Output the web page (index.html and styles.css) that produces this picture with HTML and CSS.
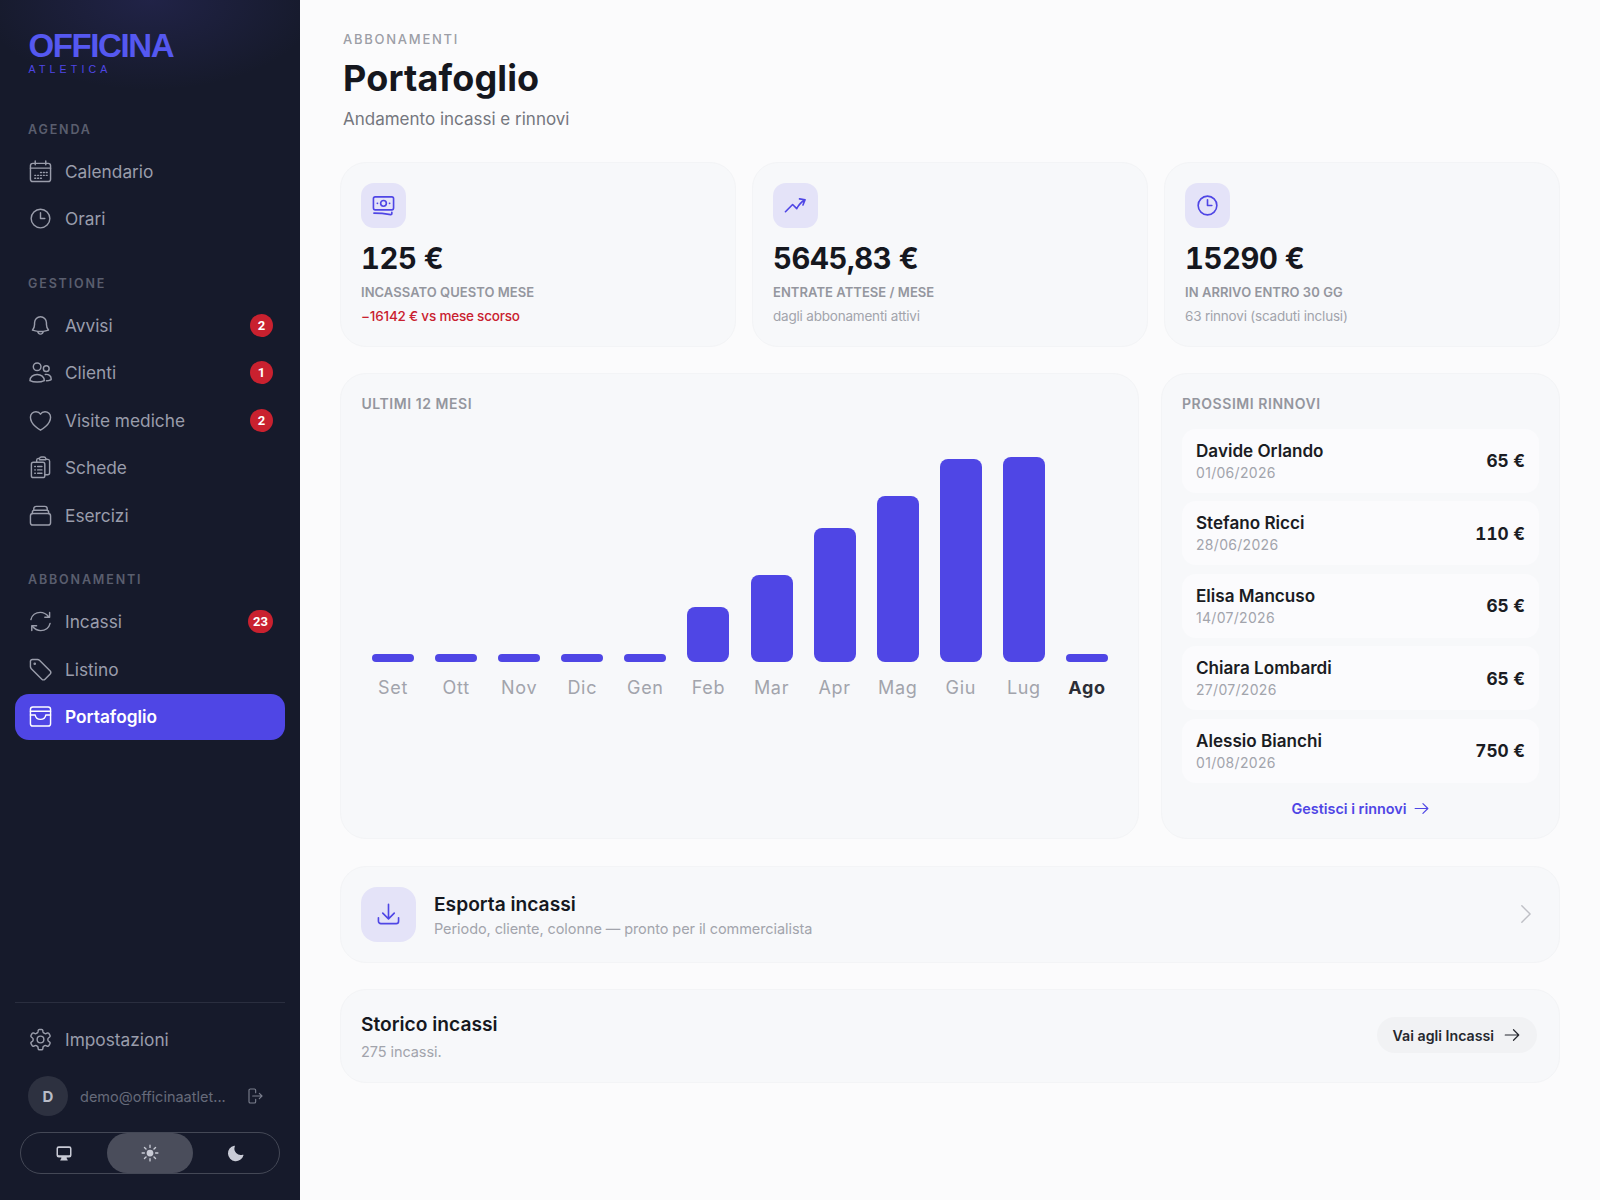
FILE: index.html
```html
<!DOCTYPE html>
<html lang="it">
<head>
<meta charset="utf-8">
<title>Portafoglio</title>
<link rel="stylesheet" href="styles.css">
</head>
<body>
<svg class="defs" width="0" height="0" aria-hidden="true">
  <defs>
    <symbol id="i-arrow" viewBox="0 0 24 24"><path d="M3 12h18M14 5l7 7-7 7"/></symbol>
    <symbol id="i-clock" viewBox="0 0 24 24"><circle cx="12" cy="12" r="9.75"/><path d="M12 6v6h4.5"/></symbol>
  </defs>
</svg>
<div class="app">
  <aside class="sidebar">
    <div class="brand">
      <div class="brand-name">OFFICINA</div>
      <div class="brand-sub">ATLETICA</div>
    </div>
    <nav class="nav">
      <div class="nav-label nav-label-first">AGENDA</div>
      <a class="nav-item"><svg class="nav-icon" viewBox="0 0 24 24"><rect x="1.500" y="3.500" width="21" height="19" rx="2.500"/><path d="M6.500 1v4M17.500 1v4M1.500 8.500h21"/><path class="dots" d="M6 16h1M9 16h1M12 16h1M15 16h1M18 16h1M6 19h1M9 19h1M12 19h1M15 13h1M18 13h1M12 13h1"/></svg><span>Calendario</span></a>
      <a class="nav-item"><svg class="nav-icon" viewBox="0 0 24 24"><use href="#i-clock"/></svg><span>Orari</span></a>

      <div class="nav-label">GESTIONE</div>
      <a class="nav-item"><svg class="nav-icon" viewBox="0 0 24 24"><path d="M14.900 18.100c1.900-.2 3.700-.7 5.500-1.300-1.400-1.600-2.200-3.600-2.200-5.800V9a6.200 6.200 0 1 0-12.400 0v2c0 2.200-.8 4.200-2.200 5.800 1.800.6 3.600 1.100 5.500 1.300m5.800 0a36 36 0 0 1-5.800 0m5.800 0a2.900 2.900 0 1 1-5.800 0"/></svg><span>Avvisi</span><b class="badge">2</b></a>
      <a class="nav-item"><svg class="nav-icon" viewBox="0 0 24 24"><circle cx="8.500" cy="6" r="4"/><circle cx="18" cy="8" r="3"/><path d="M1 20.500c0-4 3.400-6.500 7.500-6.500s7.500 2.500 7.500 6.500c-2 1-5 1.500-7.500 1.500s-5.500-.5-7.500-1.500z"/><path d="M17 14c3.500-.4 6.200 1.500 6.200 5 0 .6-2 1.500-5 1.600"/></svg><span>Clienti</span><b class="badge">1</b></a>
      <a class="nav-item"><svg class="nav-icon" viewBox="0 0 24 24"><path d="M22.500 8.500c0-3.100-2.600-5.600-5.800-5.600-2 0-3.800 1-4.700 2.500-.9-1.500-2.700-2.500-4.700-2.500C4.100 2.900 1.500 5.400 1.500 8.500c0 8 10.500 13.600 10.500 13.600s10.500-5.600 10.500-13.600z"/></svg><span>Visite mediche</span><b class="badge">2</b></a>
      <a class="nav-item"><svg class="nav-icon" viewBox="0 0 24 24"><path d="M16.500 19.500h3a2 2 0 0 0 2-2V5.500a2 2 0 0 0-1.800-2l-1.700-.2"/><path d="M8 6.500V4.500a2 2 0 0 1 1.800-2l1.200-.1A2 2 0 0 1 13 1h2.500a2 2 0 0 1 2 1.500v1.500h-6.700"/><rect x="2.500" y="6.500" width="14" height="16" rx="2"/><path d="M6 11h.6M9 11h4.500M6 14.500h.6M9 14.500h4.500M6 18h.6M9 18h4.500"/></svg><span>Schede</span></a>
      <a class="nav-item"><svg class="nav-icon" viewBox="0 0 24 24"><path d="M5 6.500V5a2.500 2.500 0 0 1 2.500-2.500h9A2.500 2.500 0 0 1 19 5v1.500"/><path d="M3.500 10V8.500A2 2 0 0 1 5.500 6.500h13a2 2 0 0 1 2 2V10"/><rect x="1.500" y="10" width="21" height="12" rx="2.500"/></svg><span>Esercizi</span></a>

      <div class="nav-label">ABBONAMENTI</div>
      <a class="nav-item"><svg class="nav-icon" viewBox="0 0 24 24"><path d="M2 10C3 5.500 7 2.500 11.800 2.500c3.500 0 6.200 1.500 8.700 4.500M2.900 21.500V16.500h5M21.500 2.500V7.500h-5"/><path d="M22 14c-1 4.500-5 7.500-9.800 7.500-3.500 0-6.200-1.500-8.700-4.500"/></svg><span>Incassi</span><b class="badge badge-wide">23</b></a>
      <a class="nav-item"><svg class="nav-icon" viewBox="0 0 24 24"><path d="M3.500 1.500h5.300c.8 0 1.500.3 2.100.9l11 11c1 1 1 2.400.2 3.300l-5.400 5.400c-.9.9-2.400.9-3.300 0l-11-11a3 3 0 0 1-.9-2.100V3.500a2 2 0 0 1 2-2z"/><circle cx="6" cy="6" r=".6"/></svg><span>Listino</span></a>
      <a class="nav-item nav-item-active"><svg class="nav-icon" viewBox="0 0 24 24"><rect x="1.500" y="2" width="21" height="20" rx="2.500"/><path d="M1.500 6.500h21M1.500 10.500h5c.5 2.700 2.700 4.500 5.500 4.500s5-1.800 5.500-4.500h5"/></svg><span>Portafoglio</span></a>
    </nav>

    <div class="side-foot">
      <a class="nav-item"><svg class="nav-icon" viewBox="0 0 24 24"><path d="M9.600 2.500c.1-.6.600-1 1.200-1h2.400c.6 0 1.100.4 1.200 1l.2 1.600c.1.500.4.900.9 1.100l.8.500c.4.200.9.300 1.400.1l1.500-.6c.6-.2 1.200 0 1.500.5l1.200 2.100c.3.500.2 1.200-.3 1.600l-1.300 1c-.4.300-.6.800-.6 1.200v1c0 .5.200.9.600 1.200l1.300 1c.5.400.6 1.100.3 1.600l-1.200 2.100c-.3.500-.9.700-1.500.5l-1.500-.6c-.5-.2-1-.1-1.400.1l-.8.500c-.5.200-.8.600-.9 1.100l-.2 1.600c-.1.600-.6 1-1.200 1h-2.400c-.6 0-1.100-.4-1.200-1l-.2-1.600c-.1-.5-.4-.9-.9-1.100l-.8-.5c-.4-.2-.9-.3-1.400-.1l-1.500.6c-.6.2-1.200 0-1.500-.5l-1.200-2.100c-.3-.5-.2-1.200.3-1.600l1.300-1c.4-.3.600-.8.600-1.200v-1c0-.5-.2-.9-.6-1.200l-1.300-1c-.5-.4-.6-1.100-.3-1.600l1.200-2.100c.3-.5.900-.7 1.500-.5l1.500.6c.5.200 1 .1 1.400-.1l.8-.5c.5-.2.800-.6.900-1.100z"/><circle cx="12" cy="12" r="3.500"/></svg><span>Impostazioni</span></a>
      <div class="user">
        <div class="avatar">D</div>
        <div class="user-mail">demo@officinaatlet...</div>
        <svg class="logout" viewBox="0 0 24 24"><path d="M13 7V3.500A2 2 0 0 0 11 1.500H5a2 2 0 0 0-2 2v17a2 2 0 0 0 2 2h6a2 2 0 0 0 2-2V17M8.500 12h14M18.500 8l4 4-4 4"/></svg>
      </div>
      <div class="theme">
        <div class="theme-opt"><svg class="theme-icon" viewBox="0 0 24 24"><path class="solid" fill-rule="evenodd" d="M5 3h14a3 3 0 0 1 3 3v9a3 3 0 0 1-3 3h-3.500l.5 2.500h1v1.500H7v-1.500h1l.5-2.500H5a3 3 0 0 1-3-3V6a3 3 0 0 1 3-3zm0 2.200a1 1 0 0 0-1 1V14a1 1 0 0 0 1 1h14a1 1 0 0 0 1-1V6.200a1 1 0 0 0-1-1z"/></svg></div>
        <div class="theme-opt theme-opt-active"><svg class="theme-icon" viewBox="0 0 24 24"><circle class="solid" cx="12" cy="12" r="4.500"/><path class="rays" d="M12 1.500v3M12 19.500v3M1.500 12h3M19.500 12h3M4.600 4.600l2.100 2.100M17.300 17.300l2.100 2.100M4.600 19.400l2.100-2.100M17.300 6.700l2.100-2.100"/></svg></div>
        <div class="theme-opt"><svg class="theme-icon" viewBox="0 0 24 24"><path class="solid" d="M9.500 2.200a.8.800 0 0 1 .9 1.100 8.500 8.500 0 0 0 10.500 11 .8.800 0 0 1 1 1A10.500 10.500 0 1 1 9.500 2.200z"/></svg></div>
      </div>
    </div>
  </aside>

  <main class="main">
    <header class="head">
      <div class="eyebrow">ABBONAMENTI</div>
      <h1 class="title">Portafoglio</h1>
      <p class="subtitle">Andamento incassi e rinnovi</p>
    </header>

    <section class="stats">
      <article class="card stat">
        <div class="stat-icon"><svg class="accent-icon" viewBox="0 0 24 24"><rect x="1.500" y="3" width="21" height="13.500" rx="1.800"/><circle cx="12" cy="9.750" r="3"/><path d="M5.500 9.750h.3M18.200 9.750h.3M2 20c6 0 12 .6 17.500 1.500.7.100 1.200-.3 1.200-1V19"/></svg></div>
        <div class="stat-value">125 €</div>
        <div class="stat-label">INCASSATO QUESTO MESE</div>
        <div class="stat-note stat-note-neg">−16142 € vs mese scorso</div>
      </article>
      <article class="card stat">
        <div class="stat-icon"><svg class="accent-icon" viewBox="0 0 24 24"><path d="M1.500 18.500 9 11l4.300 4.300c1.900-3.900 4.800-7 8.700-9.300M22 6l-5.800-.9M22 6l-2.200 5.500"/></svg></div>
        <div class="stat-value">5645,83 €</div>
        <div class="stat-label">ENTRATE ATTESE / MESE</div>
        <div class="stat-note">dagli abbonamenti attivi</div>
      </article>
      <article class="card stat">
        <div class="stat-icon"><svg class="accent-icon" viewBox="0 0 24 24"><use href="#i-clock"/></svg></div>
        <div class="stat-value">15290 €</div>
        <div class="stat-label">IN ARRIVO ENTRO 30 GG</div>
        <div class="stat-note">63 rinnovi (scaduti inclusi)</div>
      </article>
    </section>

    <section class="mid">
      <article class="card chart-card">
        <h2 class="card-title">ULTIMI 12 MESI</h2>
        <div class="chart">
          <div class="col"><div class="bar" style="height:8px"></div><span class="month">Set</span></div>
          <div class="col"><div class="bar" style="height:8px"></div><span class="month">Ott</span></div>
          <div class="col"><div class="bar" style="height:8px"></div><span class="month">Nov</span></div>
          <div class="col"><div class="bar" style="height:8px"></div><span class="month">Dic</span></div>
          <div class="col"><div class="bar" style="height:8px"></div><span class="month">Gen</span></div>
          <div class="col"><div class="bar" style="height:55px"></div><span class="month">Feb</span></div>
          <div class="col"><div class="bar" style="height:87px"></div><span class="month">Mar</span></div>
          <div class="col"><div class="bar" style="height:134px"></div><span class="month">Apr</span></div>
          <div class="col"><div class="bar" style="height:166px"></div><span class="month">Mag</span></div>
          <div class="col"><div class="bar" style="height:203px"></div><span class="month">Giu</span></div>
          <div class="col"><div class="bar" style="height:205px"></div><span class="month">Lug</span></div>
          <div class="col"><div class="bar" style="height:8px"></div><span class="month month-now">Ago</span></div>
        </div>
      </article>

      <article class="card renew-card">
        <h2 class="card-title">PROSSIMI RINNOVI</h2>
        <ul class="renew-list">
          <li class="renew"><div><div class="renew-name">Davide Orlando</div><div class="renew-date">01/06/2026</div></div><div class="renew-amt">65 €</div></li>
          <li class="renew"><div><div class="renew-name">Stefano Ricci</div><div class="renew-date">28/06/2026</div></div><div class="renew-amt">110 €</div></li>
          <li class="renew"><div><div class="renew-name">Elisa Mancuso</div><div class="renew-date">14/07/2026</div></div><div class="renew-amt">65 €</div></li>
          <li class="renew"><div><div class="renew-name">Chiara Lombardi</div><div class="renew-date">27/07/2026</div></div><div class="renew-amt">65 €</div></li>
          <li class="renew"><div><div class="renew-name">Alessio Bianchi</div><div class="renew-date">01/08/2026</div></div><div class="renew-amt">750 €</div></li>
        </ul>
        <a class="renew-link">Gestisci i rinnovi <svg class="link-arrow" viewBox="0 0 24 24"><use href="#i-arrow"/></svg></a>
      </article>
    </section>

    <article class="card export">
      <div class="export-icon"><svg class="accent-icon" viewBox="0 0 24 24"><path d="M12 1.500v14.500M6 10.500l6 6 6-6M1.500 15.500v3.500a2.500 2.500 0 0 0 2.500 2.500h16a2.500 2.500 0 0 0 2.500-2.500v-3.500"/></svg></div>
      <div class="row-text">
        <h3 class="row-title">Esporta incassi</h3>
        <p class="row-sub row-sub-tight">Periodo, cliente, colonne — pronto per il commercialista</p>
      </div>
      <svg class="chevron" viewBox="0 0 12 24"><path d="M2 3l9 9-9 9"/></svg>
    </article>

    <article class="card history">
      <div class="row-text">
        <h3 class="row-title">Storico incassi</h3>
        <p class="row-sub row-sub-gap">275 incassi.</p>
      </div>
      <a class="pill">Vai agli Incassi <svg class="pill-arrow" viewBox="0 0 24 24"><use href="#i-arrow"/></svg></a>
    </article>
  </main>
</div>
</body>
</html>
```

FILE: styles.css
```css
* { box-sizing: border-box; }
html, body { margin: 0; padding: 0; height: 100%; }
body {
  font-family: "Inter", "Liberation Sans", sans-serif;
  color: #16181f;
  background: #fbfbfc;
}
.defs { position: absolute; }
h1, h2, h3, p, ul { margin: 0; padding: 0; }
ul { list-style: none; }

.app { display: flex; width: 1600px; height: 1200px; overflow: hidden; }

/* Sidebar */
.sidebar {
  width: 300px;
  flex: none;
  display: flex;
  flex-direction: column;
  padding: 0 15px;
  background:
    radial-gradient(ellipse 170px 90px at 150px 0, rgba(70, 66, 170, 0.22), rgba(70, 66, 170, 0) 100%),
    #161a2b;
}
.brand { padding: 29px 13.500px 0; height: 116px; }
.brand-name {
  font-family: "Liberation Sans", sans-serif;
  font-weight: 700;
  font-size: 33px;
  line-height: 34px;
  letter-spacing: -1.4px;
  color: #5558f0;
}
.brand-sub {
  font-family: "Liberation Sans", sans-serif;
  font-size: 10.500px;
  line-height: 12px;
  letter-spacing: 4.200px;
  color: #4f46e5;
}
.nav { display: flex; flex-direction: column; gap: 2px; }
.nav-label {
  padding: 32px 13px 9px;
  font-size: 12.500px;
  font-weight: 600;
  line-height: 16px;
  letter-spacing: 1.850px;
  color: #5a5e6e;
}
.nav-label-first { padding-top: 6px; padding-bottom: 8.500px; }
.nav-item {
  display: flex;
  align-items: center;
  height: 45.500px;
  padding: 0 12px 0 13.500px;
  border-radius: 14px;
  font-size: 17.300px;
  color: #9a9dab;
}
.nav-icon {
  width: 23px;
  height: 23px;
  flex: none;
  margin-right: 13.500px;
  fill: none;
  stroke: currentColor;
  stroke-width: 1.500;
  stroke-linecap: round;
  stroke-linejoin: round;
}
.nav-icon .dots { stroke-width: 1.400; }
.nav-item > span { flex: 1; }
.nav-item-active { background: #4f46e5; color: #fff; font-weight: 600; }
.badge {
  display: flex;
  align-items: center;
  justify-content: center;
  width: 23px;
  height: 23px;
  border-radius: 12px;
  background: #c9212f;
  color: #fff;
  font-family: "Roboto", sans-serif;
  font-size: 13px;
  font-weight: 700;
}
.badge-wide { width: 25px; }

.side-foot { margin-top: auto; padding-bottom: 26px; border-top: 1px solid #2a2e3f; padding-top: 14.500px; }
.user { display: flex; align-items: center; height: 40px; margin-top: 13.500px; padding: 0 13px; }
.avatar {
  width: 40px;
  height: 40px;
  flex: none;
  display: flex;
  align-items: center;
  justify-content: center;
  border-radius: 50%;
  background: #2d3140;
  color: #b9bcc7;
  font-size: 15px;
  font-weight: 700;
}
.user-mail {
  width: 146px;
  margin-left: 12px;
  white-space: nowrap;
  font-size: 14.500px;
  color: #666a7a;
}
.logout {
  width: 16px;
  height: 16px;
  margin-left: 21px;
  fill: none;
  stroke: #7a7e8d;
  stroke-width: 1.700;
  stroke-linecap: round;
  stroke-linejoin: round;
}
.theme {
  display: flex;
  height: 42px;
  margin: 16px 5px 0;
  border: 1px solid #444856;
  border-radius: 21px;
  overflow: hidden;
}
.theme-opt { flex: 1; display: flex; align-items: center; justify-content: center; }
.theme-opt-active { background: #4a4d5b; border-radius: 21px; }
.theme-icon { width: 18px; height: 18px; }
.theme-icon .solid { fill: #c9cbd6; }
.theme-icon .rays { fill: none; stroke: #c9cbd6; stroke-width: 1.800; stroke-linecap: round; }

/* Main */
.main { flex: 1; padding: 31px 40px 0 40px; min-width: 0; }
.head { padding-left: 3px; margin-bottom: 29.500px; }
.eyebrow { font-size: 13px; font-weight: 500; line-height: 16px; letter-spacing: 1.750px; color: #9c9ea6; }
.title { margin-top: 7px; font-size: 36px; font-weight: 700; line-height: 48px; letter-spacing: 0.150px; color: #15171e; }
.subtitle { margin-top: 4px; font-size: 17px; line-height: 26px; color: #74767e; }

.card { background: #f7f8fa; border: 1px solid #f3f4f6; border-radius: 26px; }

.stats { display: grid; grid-template-columns: repeat(3, 1fr); gap: 16px; }
.stat { height: 185.500px; padding: 20px; }
.stat-icon {
  width: 45px;
  height: 45px;
  display: flex;
  align-items: center;
  justify-content: center;
  border-radius: 13px;
  background: #e4e3f8;
}
.accent-icon {
  width: 23px;
  height: 23px;
  fill: none;
  stroke: #4f46e5;
  stroke-width: 1.700;
  stroke-linecap: round;
  stroke-linejoin: round;
}
.stat-value {
  margin-top: 13px;
  font-size: 29.200px;
  font-weight: 700;
  line-height: 36px;
  letter-spacing: -0.4px;
  font-variant-numeric: tabular-nums;
  color: #15171e;
}
.stat-label { margin-top: 6px; font-size: 13px; font-weight: 600; line-height: 18px; letter-spacing: 0.050px; color: #94969e; }
.stat-note { margin-top: 6px; font-size: 13.500px; line-height: 18px; letter-spacing: -0.200px; color: #a2a4ac; }
.stat-note-neg { color: #c9212f; font-weight: 500; }

.mid { display: grid; grid-template-columns: 799px 1fr; gap: 22px; margin-top: 25.500px; height: 466px; }
.chart-card { padding: 20px 19.500px 20px 20.500px; }
.card-title { font-size: 14px; font-weight: 600; line-height: 20px; letter-spacing: 0.550px; color: #94969e; }
.chart { display: grid; grid-template-columns: repeat(12, 1fr); height: 265px; margin-top: 20px; }
.col { display: flex; flex-direction: column; align-items: center; justify-content: flex-end; }
.bar { width: 42px; background: #4f46e5; border-radius: 8px; }
.month { margin-top: 15px; font-size: 18px; line-height: 22px; letter-spacing: 0.700px; color: #a2a4ac; }
.month-now { color: #2c2e36; font-weight: 700; }

.renew-card { padding: 20px 20px 0; }
.renew-list { display: flex; flex-direction: column; gap: 8.500px; margin-top: 15px; }
.renew {
  display: flex;
  align-items: center;
  justify-content: space-between;
  height: 64px;
  padding: 0 14px;
  border-radius: 14px;
  background: #fbfbfd;
}
.renew-name { font-size: 17.100px; font-weight: 600; line-height: 24px; color: #1a1c23; }
.renew-date { font-size: 14px; line-height: 20px; letter-spacing: 0.300px; color: #a2a4ac; }
.renew-amt { font-size: 17.200px; font-weight: 700; font-variant-numeric: tabular-nums; color: #1a1c23; }
.renew-link {
  display: flex;
  align-items: center;
  justify-content: center;
  gap: 6px;
  margin-top: 17px;
  font-size: 14.400px;
  font-weight: 600;
  color: #4f46e5;
}
.link-arrow, .pill-arrow {
  width: 17px;
  height: 17px;
  fill: none;
  stroke: currentColor;
  stroke-width: 1.600;
  stroke-linecap: round;
  stroke-linejoin: round;
}

.export { display: flex; align-items: center; height: 97px; margin-top: 27px; padding: 0 28px 0 20px; }
.export-icon {
  width: 55px;
  height: 55px;
  flex: none;
  display: flex;
  align-items: center;
  justify-content: center;
  margin-right: 18px;
  border-radius: 16px;
  background: #e4e3f8;
}
.row-text { flex: 1; padding-top: 2px; }
.row-title { font-size: 19.200px; font-weight: 600; line-height: 26px; color: #16181f; }
.row-sub { font-size: 14.500px; line-height: 20px; letter-spacing: -0.080px; color: #a2a4ac; }
.row-sub-tight { margin-top: 2px; }
.row-sub-gap { margin-top: 5px; }
.chevron { width: 11px; height: 22px; fill: none; stroke: #bfc0c6; stroke-width: 1.600; stroke-linecap: round; stroke-linejoin: round; }

.history { display: flex; align-items: center; height: 94px; margin-top: 26px; padding: 0 22px 0 20px; }
.pill {
  display: flex;
  align-items: center;
  gap: 9px;
  height: 36px;
  margin-top: -1px;
  padding: 0 16px;
  border-radius: 18px;
  background: #f1f2f4;
  font-size: 14.200px;
  font-weight: 600;
  color: #25272e;
}
.pill-arrow { width: 18px; height: 18px; }
```
